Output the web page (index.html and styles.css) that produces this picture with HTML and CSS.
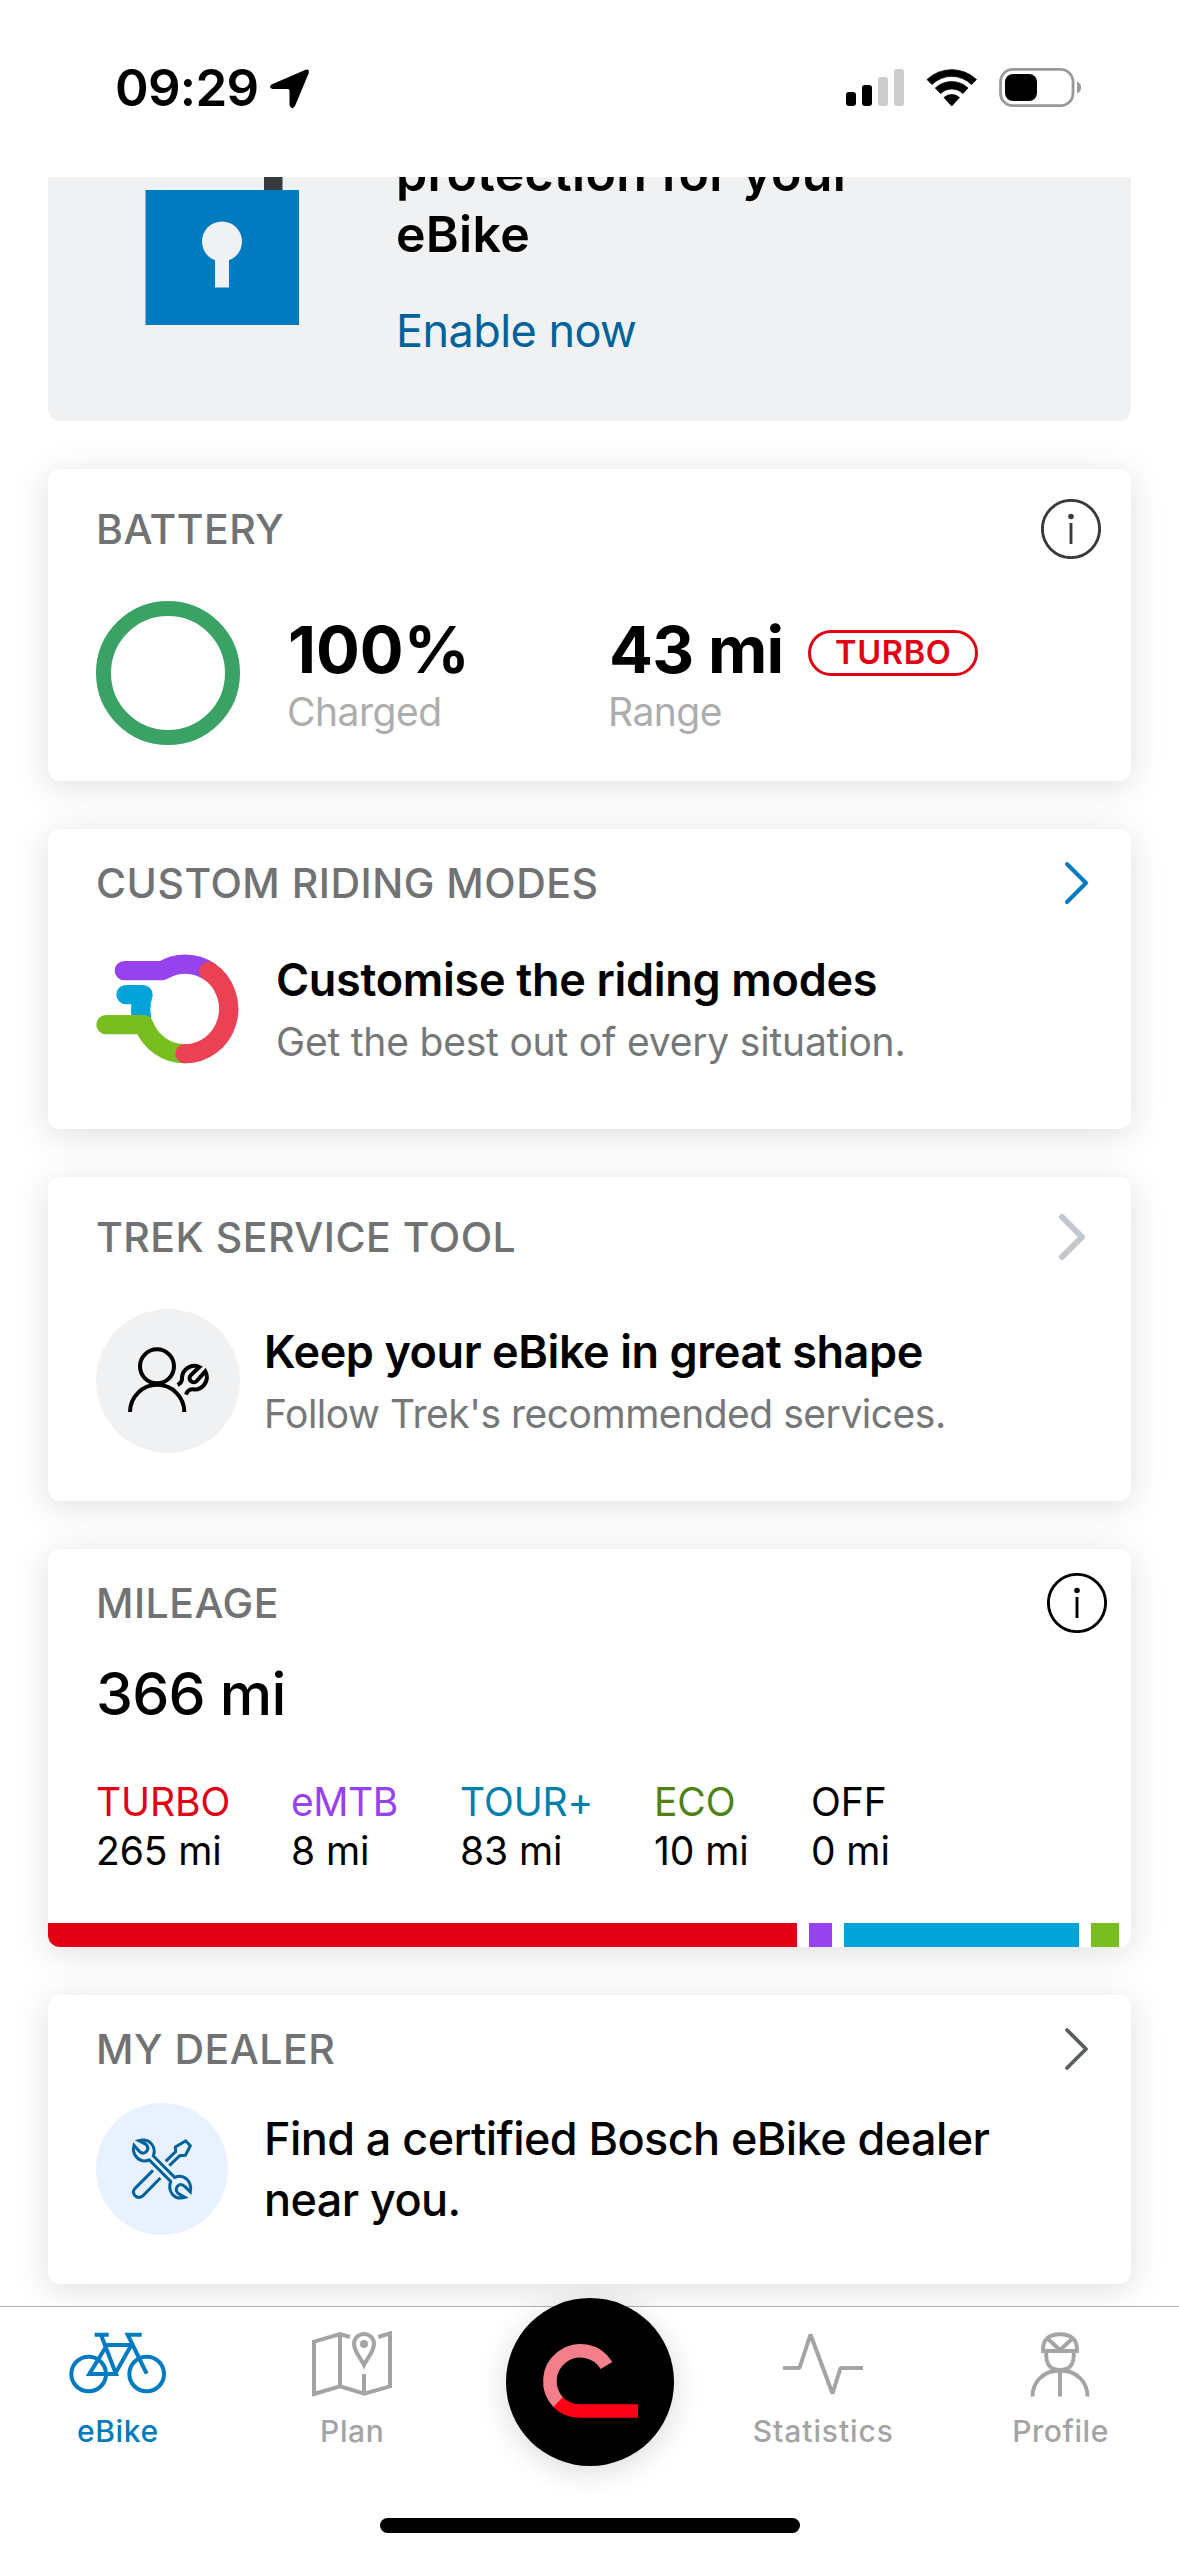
FILE: index.html
```html
<!DOCTYPE html>
<html lang="en">
<head>
<meta charset="utf-8">
<title>eBike</title>
<link rel="stylesheet" href="styles.css">
</head>
<body>
<div class="screen">
  <header class="status">
    <div class="status-left">
      <span class="time">09:29</span>
      <svg class="loc" width="40" height="40" viewBox="270 69 40 40"><path d="M305 70 Q309.500 68 308.800 73 L295 106 Q291.500 111 289.500 105 V91 Q289.500 89 288 89 H273 Q268 88 271.500 84.500 Z" fill="#000"/></svg>
    </div>
    <svg class="indicators" width="238" height="42" viewBox="845 67 238 42">
      <rect x="846" y="92" width="10" height="14" rx="3"/><rect x="862" y="85" width="10" height="21" rx="3"/>
      <g fill="#ccc"><rect x="878" y="77" width="10" height="29" rx="3"/><rect x="894" y="69" width="10" height="37" rx="3"/></g>
      <path d="M927 79.500 A36 36 0 0 1 976.500 79.500 L971.500 84.500 A28 28 0 0 0 932 84.500 Z M935.300 88 A24 24 0 0 1 968 88 L963 93.500 A16 16 0 0 0 940.500 93.500 Z M944 97.500 A11.500 11.500 0 0 1 959.500 97.500 L951.700 106 Z" stroke="#000" stroke-width=".8" stroke-linejoin="round"/>
      <rect x="1000.500" y="69.300" width="72.500" height="36.400" rx="12.500" fill="none" stroke="#999" stroke-width="2.800"/>
      <rect x="1005" y="74" width="32" height="27" rx="8"/>
      <path d="M1077 81.500 Q1081 83 1081 87.500 Q1081 92 1077 93.500 Z" fill="#999"/>
    </svg>
  </header>

  <main class="feed">
    <section class="promo">
      <svg class="lock" width="156" height="148" viewBox="144 177 156 148"><rect x="264" y="177" width="18.500" height="14" fill="#383b3e"/><rect x="145.500" y="190" width="153.500" height="135" fill="#007bc0"/><circle cx="222" cy="241.500" r="20" fill="#eff1f2"/><rect x="215" y="250" width="14" height="37.500" fill="#eff1f2"/></svg>
      <div class="promo-text">
        <div class="promo-title">protection for your<br>eBike</div>
        <a class="promo-link">Enable now</a>
      </div>
    </section>

    <section class="card battery">
      <div class="head"><h2>BATTERY</h2>
        <svg class="info dark" viewBox="0 0 60 60"><circle cx="30" cy="30" r="28.600"/><path d="M30 24 V45"/><circle class="dot" cx="30" cy="17.500" r="2.800"/></svg></div>
      <div class="battery-body">
        <div class="ring"></div>
        <div class="stat charged"><div class="big">100%</div><div class="muted">Charged</div></div>
        <div class="stat"><div class="big-row"><span class="big range">43 mi</span><span class="pill">TURBO</span></div><div class="muted">Range</div></div>
      </div>
    </section>

    <section class="card modes">
      <div class="head"><h2>CUSTOM RIDING MODES</h2>
        <svg class="chev" width="26" height="46" viewBox="0 0 26 46"><path d="M3 4 L22 23 L3 42" stroke="#007bc0" stroke-width="4"/></svg></div>
      <div class="row">
        <svg class="mode-icon" width="144" height="112" viewBox="50 99 432 336" fill="none" stroke-width="58" stroke-linecap="round" stroke-linejoin="round">
          <path d="M140 224 H191 A131 134.500 0 0 0 186 290" stroke="#00a4d8"/>
          <path d="M135 152 H249 A131 134.500 0 0 1 389 154" stroke="#9642ed"/>
          <path d="M80 314 H193 A131 134.500 0 0 0 317 401" stroke="#78be20"/>
          <path d="M389 154 A131 134.500 0 0 1 317 401" stroke="#ea4254"/>
        </svg>
        <div class="copy"><div class="lead">Customise the riding modes</div><div class="sub">Get the best out of every situation.</div></div>
      </div>
    </section>

    <section class="card service">
      <div class="head"><h2>TREK SERVICE TOOL</h2>
        <svg class="chev" width="32" height="50" viewBox="0 0 32 50"><path d="M5 5 L25 25 L5 45" stroke="#c1c7cc" stroke-width="6"/></svg></div>
      <div class="row">
        <div class="badge grey"><svg width="144" height="144" viewBox="48 57 432 432" fill="none" stroke="#000" stroke-width="12"><circle cx="231" cy="229" r="51"/><path d="M150 366 A81.500 81.500 0 0 1 313 366"/><path d="M293 285 Q308 277 306 262 A37 37 0 0 1 358 231 L332 256 A12 12 0 0 0 350 273 L376 244 A37 37 0 0 1 338 298 Q324 297 318 314"/></svg></div>
        <div class="copy"><div class="lead">Keep your eBike in great shape</div><div class="sub">Follow Trek's recommended services.</div></div>
      </div>
    </section>

    <section class="card mileage">
      <div class="head"><h2>MILEAGE</h2>
        <svg class="info" viewBox="0 0 60 60"><circle cx="30" cy="30" r="28.600"/><path d="M30 24 V45"/><circle class="dot" cx="30" cy="17.500" r="2.800"/></svg></div>
      <div class="total">366 mi</div>
      <div class="legend">
        <div class="turbo"><b>TURBO</b><i>265 mi</i></div>
        <div class="emtb"><b>eMTB</b><i>8 mi</i></div>
        <div class="tour"><b>TOUR+</b><i>83 mi</i></div>
        <div class="eco"><b>ECO</b><i>10 mi</i></div>
        <div><b>OFF</b><i>0 mi</i></div>
      </div>
      <div class="bar"><span class="bar-turbo"></span><span class="bar-emtb"></span><span class="bar-tour"></span><span class="bar-eco"></span></div>
    </section>

    <section class="card dealer">
      <div class="head"><h2>MY DEALER</h2>
        <svg class="chev" width="26" height="46" viewBox="0 0 26 46"><path d="M3 4 L22 23 L3 42" stroke="#595e62" stroke-width="3.800"/></svg></div>
      <div class="row">
        <div class="badge blue"><svg width="132" height="132" viewBox="48 39 396 396" fill="none" stroke="#00629a" stroke-width="9">
          <path d="M176 152 Q199 145 214 161 Q228 178 220 198 L284 262 Q304 253 320 267 Q336 282 331 306 L315 290 Q303 278 293 288 Q284 299 294 310 L315 322 Q292 329 278 314 Q264 298 272 274 L208 210 Q186 218 171 203 Q156 187 162 166 L178 184 Q190 195 200 184 Q208 173 198 163 Z"/>
          <path d="M257 214 L287 185 L286 171 L317 153 L331 167 L316 196 L299 197 L268 227 M219 241 L165 295 Q156 305 164 316 Q175 327 188 318 L241 264"/>
        </svg></div>
        <div class="find">Find a certified Bosch eBike dealer<br>near you.</div>
      </div>
    </section>
  </main>

  <nav class="tabs">
    <div class="tab active"><svg width="98" height="66" viewBox="88 126 294 198" fill="none" stroke="#007bc0" stroke-width="12"><circle cx="147" cy="255" r="52"/><circle cx="321" cy="255" r="52"/><path d="M165 137 H207 M184 137 L229 255 H149 L202 168 H275 L226 255 M306 137 H264 L321 254"/></svg><span class="label">eBike</span></div>
    <div class="tab plan"><svg width="84" height="66" viewBox="810 123 252 198" fill="none" stroke="#a4a4a4" stroke-width="12"><path d="M930 141 L900 132 L822 155 V312 L900 289 L973 311 L1050 289 V130 L1015 141 M900 132 V289 M972 252 V311"/><path d="M972 225 C961 202 942 184 942 162 A30 30 0 0 1 1002 162 C1002 184 983 202 972 225 Z"/><circle cx="972" cy="162" r="12" fill="#a4a4a4" stroke="none"/></svg><span class="label">Plan</span></div>
    <div class="tab center"><div class="ride"><svg width="168" height="168" viewBox="505.500 2299 168 168" fill="none" stroke-width="13.600"><path d="M606 2366.500 A30.500 30.500 0 1 0 558 2403.500" stroke="#f27f8a"/><path d="M557.500 2403.100 Q566.500 2412 579 2412 H637.500" stroke="#ff0016"/></svg></div></div>
    <div class="tab stats"><svg width="84" height="66" viewBox="781 2331 84 66" fill="none" stroke="#a4a4a4" stroke-width="4"><path d="M783 2368 H799.500 L810.500 2334.500 L832.500 2393.500 L840.500 2368 H863" stroke-linejoin="bevel"/></svg><span class="label">Statistics</span></div>
    <div class="tab profile"><svg width="66" height="66" viewBox="1028 2331 66 66" fill="none" stroke="#a4a4a4" stroke-width="3.900"><path d="M1043 2351 Q1042.500 2334.200 1060 2334.200 Q1077.500 2334.200 1077 2351 Z M1048 2339 L1060 2350 L1072 2339 M1046.300 2352 Q1045 2370 1060 2370 Q1075 2370 1073.700 2352 M1032.500 2396.500 C1032.500 2382 1043 2370.500 1060 2370.500 C1077 2370.500 1087.500 2382 1087.500 2396.500 M1060 2370 V2396.500"/></svg><span class="label">Profile</span></div>
  </nav>
  <div class="home"></div>
</div>
</body>
</html>
```
FILE: styles.css
```css
* { box-sizing: border-box; }
body { margin: 0; background: #fff; }
.screen {
  width: 1179px; height: 2556px; overflow: hidden;
  display: flex; flex-direction: column;
  background: #fff; color: #000;
  font-family: Inter, "Liberation Sans", sans-serif;
  white-space: nowrap;
}
svg { display: block; flex: none; }

/* Status bar */
.status { height: 177px; flex: none; display: flex; justify-content: space-between; padding: 0 96px 0 115px; }
.status-left { display: flex; padding-top: 58px; }
.time { font-size: 51px; line-height: 60px; font-weight: 600; letter-spacing: -.7px; width: 155px; }
.loc { margin-top: 11px; }
.indicators { margin-top: 67px; }

/* Scrolled card feed */
.feed { height: 2129px; flex: none; overflow: hidden; padding: 0 48px; display: flex; flex-direction: column; gap: 48px; }
.promo { height: 244px; flex: none; overflow: hidden; background: #eff1f2; border-radius: 0 0 12px 12px; display: flex; padding-left: 96px; }
.promo-text { margin: -34px 0 0 96px; }
.promo-title { font-size: 50px; line-height: 61px; font-weight: 600; letter-spacing: .3px; }
.promo-link { display: block; margin-top: 36px; font-size: 45px; line-height: 60px; letter-spacing: -.55px; color: #00629a; }

.card { flex: none; background: #fff; border-radius: 12px; box-shadow: 0 6px 36px rgba(0, 0, 0, .13); padding-left: 48px; }
.head { display: flex; justify-content: space-between; align-items: center; height: 60px; }
.head h2 { margin: 0; font-size: 41px; line-height: 60px; font-weight: 500; letter-spacing: .5px; color: #707273; }
.info { width: 60px; height: 60px; fill: none; stroke: #000; stroke-width: 2.9; }
.info.dark { stroke: #383b3e; }
.info .dot { fill: #000; stroke: none; }
.info.dark .dot { fill: #383b3e; }
.chev path { fill: none; stroke-linecap: round; stroke-linejoin: round; }
.row { display: flex; }
.lead { font-size: 45px; line-height: 56px; font-weight: 600; letter-spacing: -.3px; }
.sub { margin-top: 10px; font-size: 39px; line-height: 48px; letter-spacing: -.2px; color: #757778; }
.badge { border-radius: 50%; flex: none; }
.grey { background: #eff1f2; width: 144px; height: 144px; }
.blue { background: #e8f1ff; width: 132px; height: 132px; }

/* Battery */
.battery { height: 312px; padding-top: 30px; padding-right: 30px; }
.battery-body { display: flex; margin-top: 42px; }
.ring { width: 144px; height: 144px; border: 15px solid #3aa264; border-radius: 50%; }
.stat { padding-top: 11px; }
.charged { width: 321px; margin-left: 48px; }
.big { font-size: 65px; line-height: 76px; font-weight: 700; }
.range { letter-spacing: -.8px; }
.big-row { display: flex; align-items: center; }
.muted { font-size: 39px; line-height: 48px; letter-spacing: -.5px; margin-left: -1px; color: #adadad; }
.pill { width: 170px; height: 46px; margin-left: 25px; margin-top: 5px; border: 3px solid #e20015; border-radius: 23px; color: #e20015; font-size: 32.5px; line-height: 40px; font-weight: 600; letter-spacing: .7px; text-align: center; }

/* Riding modes */
.modes { height: 300px; padding-top: 24px; padding-right: 41px; }
.mode-icon { margin-top: 40px; }
.modes .copy { margin: 39px 0 0 36px; }

/* Service */
.service { height: 324px; padding-top: 30px; padding-right: 42px; }
.service .row { margin-top: 42px; }
.service .copy { margin: 15px 0 0 24px; }
.service .lead { letter-spacing: -.42px; }
.service .sub { letter-spacing: -.48px; }

/* Mileage */
.mileage { height: 398px; padding-top: 24px; padding-right: 24px; display: flex; flex-direction: column; overflow: hidden; }
.total { margin: 26px 0 0; font-size: 59px; line-height: 70px; font-weight: 500; letter-spacing: -.8px; }
.legend { display: grid; grid-template-columns: 195px 169px 194px 157px 1fr; margin-top: 48px; font-size: 39px; line-height: 49px; letter-spacing: -.1px; }
.legend b, .legend i { display: block; font-style: normal; font-weight: 400; }
.turbo b { color: #e20015; }
.emtb b { color: #9642ed; letter-spacing: -.5px; }
.tour b { color: #007fa8; }
.eco b { color: #4e8213; }
.bar { display: flex; gap: 12px; height: 24px; margin: auto -24px 0 -48px; }
.bar-turbo { width: 749px; background: #e20015; }
.bar-emtb { width: 23px; background: #9642ed; }
.bar-tour { width: 235px; background: #00a4d8; }
.bar-eco { width: 28px; background: #78be20; }

/* Dealer */
.dealer { height: 289px; padding-top: 24px; padding-right: 41px; }
.dealer .badge { margin-top: 24px; }
.find { margin: 29px 0 0 36px; font-size: 45px; line-height: 61px; font-weight: 500; letter-spacing: -.58px; }

/* Tab bar */
.tabs { height: 210px; flex: none; border-top: 1px solid #b0b0b0; background: #fff; display: grid; grid-template-columns: repeat(5, 1fr); position: relative; }
.tab { display: flex; flex-direction: column; align-items: center; padding-top: 24px; font-size: 30px; line-height: 40px; font-weight: 500; letter-spacing: .6px; color: #a4a4a4; }
.label { margin-top: 14px; }
.plan { padding-right: 3px; }
.stats { padding-right: 4px; letter-spacing: .9px; }
.profile { padding-right: 1px; }
.active { color: #007bc0; }
.center { padding: 0 0 0 1px; }
.ride { margin-top: -9px; width: 168px; height: 168px; border-radius: 50%; background: #000; box-shadow: 0 6px 30px rgba(0, 0, 0, .15); }
.home { width: 420px; height: 15px; border-radius: 8px; background: #000; align-self: center; margin-top: 2px; flex: none; }
```
